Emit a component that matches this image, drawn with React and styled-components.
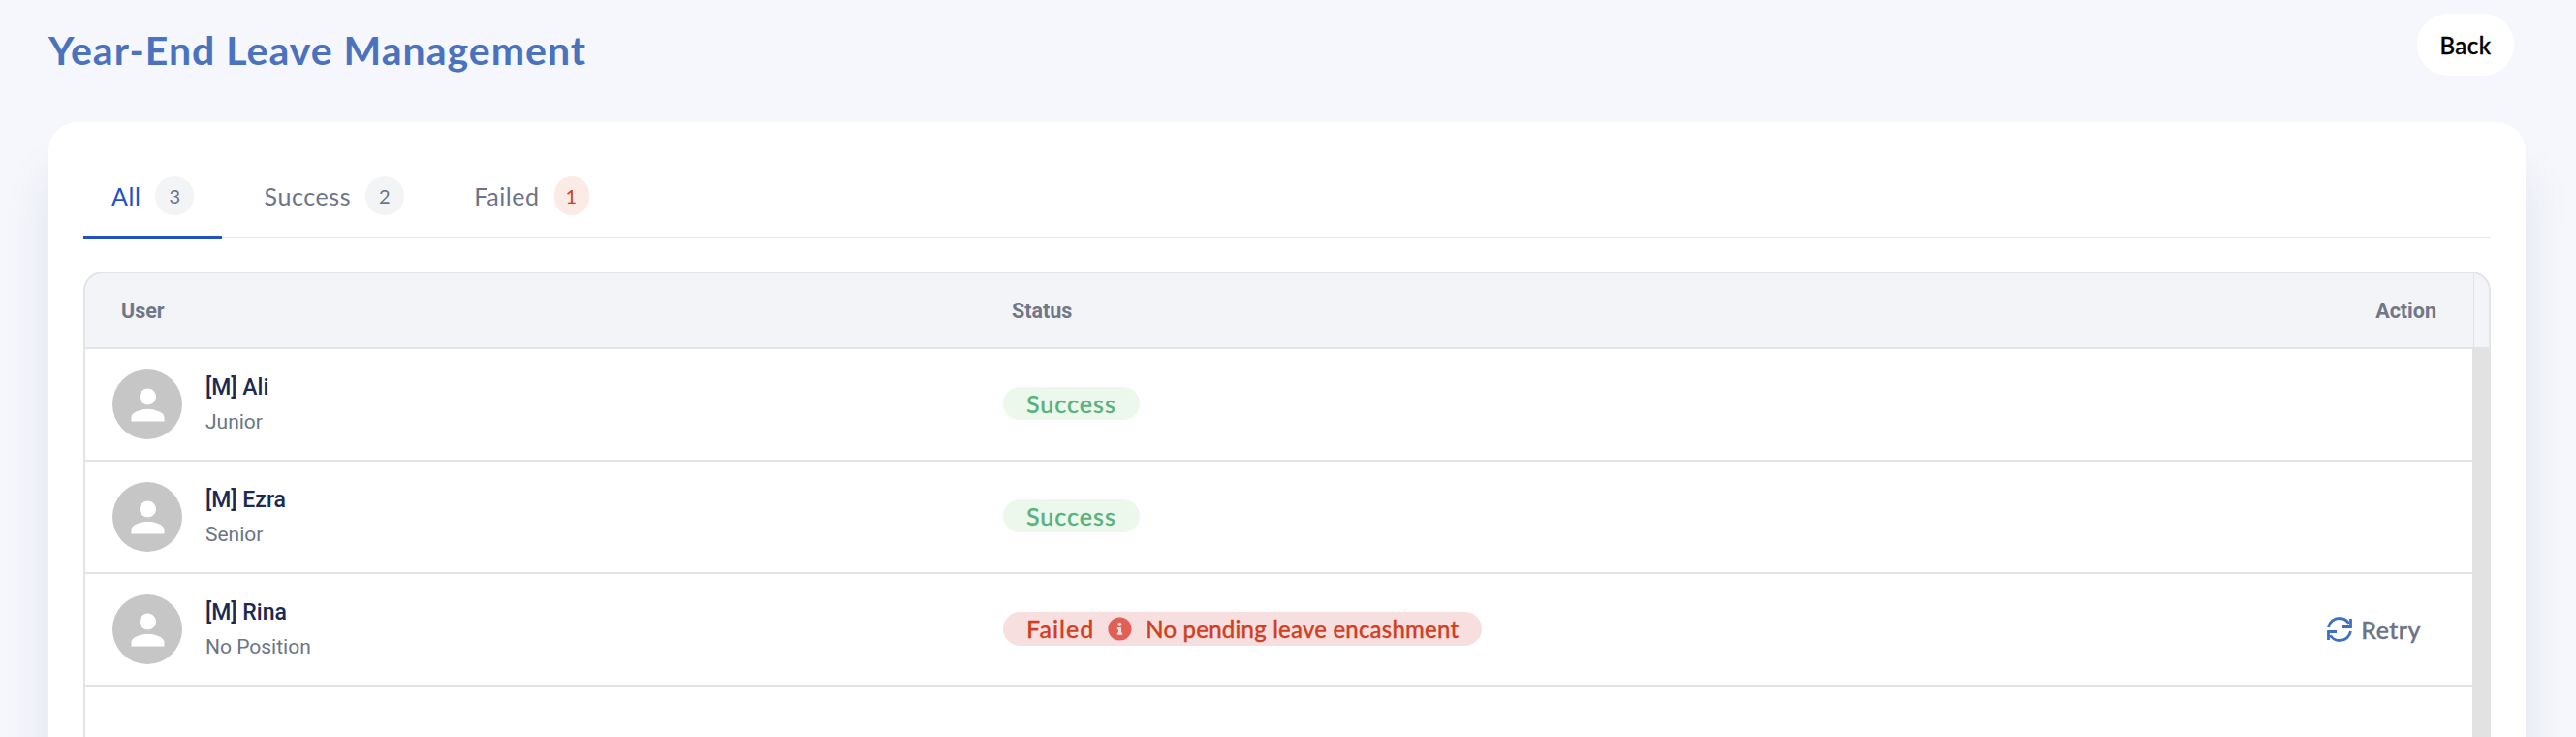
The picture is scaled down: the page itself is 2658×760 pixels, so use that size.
import React from "react";
import styled, { createGlobalStyle } from "styled-components";
import { FaInfoCircle } from "react-icons/fa";

const GlobalStyle = createGlobalStyle`
  html, body {
    margin: 0;
    height: 760px;
    overflow: hidden;
    background: #f5f7fc;
  }
`;

const Page = styled.div`
  width: 2658px;
  height: 760px;
  font-family: "Lato", "Liberation Sans", sans-serif;
  overflow: hidden;
`;

const TopBar = styled.header`
  display: flex;
  justify-content: space-between;
  align-items: flex-start;
  padding: 14px 64px 48px 50px;
`;

const Title = styled.h1`
  margin: 14px 0 0;
  font-size: 41px;
  line-height: 48px;
  font-weight: 700;
  letter-spacing: 1px;
  color: #4a72bd;
`;

const BackButton = styled.button`
  width: 100px;
  height: 64px;
  border: 0;
  border-radius: 32px;
  background: #fff;
  color: #000;
  font-family: "Lato Medium", "Lato", sans-serif;
  font-size: 24px;
  font-weight: 500;
  letter-spacing: 0.4px;
  -webkit-text-stroke: 0.4px #000;
`;

const Card = styled.main`
  margin: 0 52px 0 50px;
  height: 720px;
  box-sizing: border-box;
  padding: 36px 36px 0;
  background: #fff;
  border-radius: 30px;
  box-shadow: 0 50px 50px rgba(40, 50, 90, 0.1);
  display: flex;
  flex-direction: column;
`;

const Tabs = styled.nav`
  display: flex;
  align-items: flex-start;
  gap: 14px;
  height: 83px;
  box-sizing: border-box;
  border-bottom: 1px solid #e6e8f0;
`;

const Tab = styled.div`
  display: flex;
  align-items: center;
  gap: 15px;
  height: 84px;
  box-sizing: border-box;
  padding: 0 29px 2px;
  border-bottom: 3px solid ${(props) => (props.$active ? "#2152c4" : "transparent")};
  color: ${(props) => (props.$active ? "#2152c4" : "#6b7488")};
  font-size: 25px;
  letter-spacing: 0.6px;
`;

const Count = styled.span`
  min-width: ${(props) => (props.$danger ? "36px" : "40px")};
  height: 40px;
  display: flex;
  align-items: center;
  justify-content: center;
  border-radius: 20px;
  background: ${(props) => (props.$danger ? "#fbebe7" : "#f3f4f6")};
  color: ${(props) => (props.$danger ? "#d03c1c" : "#6b7488")};
  font-size: 20px;
`;

const Table = styled.section`
  margin-top: 35px;
  flex: 1;
  display: flex;
  flex-direction: column;
`;

const HeadRow = styled.div`
  display: flex;
  height: 76px;
  background: #f3f4f7;
  border: 2px solid #e3e4e6;
  border-radius: 20px 20px 0 0;
  font-family: "Roboto", sans-serif;
  font-size: 21.5px;
  font-weight: 700;
  color: #6f7789;
`;

const HeadCells = styled.div`
  flex: 1;
  display: grid;
  grid-template-columns: 919px 1fr 200px;
  align-items: center;
  padding: 0 38px 0 37px;
  border-right: 1px solid #e3e4e6;
`;

const HeadAction = styled.span`
  text-align: right;
`;

const ScrollGutter = styled.div`
  width: 15px;
`;

const BodyWrap = styled.div`
  flex: 1;
  display: flex;
`;

const Rows = styled.div`
  flex: 1;
  border-left: 2px solid #e3e4e6;
`;

const ScrollBar = styled.div`
  width: 19px;
  background: #e2e2e2;
`;

const Row = styled.div`
  display: grid;
  grid-template-columns: 919px 1fr 200px;
  align-items: center;
  height: 114px;
  padding: 0 53px 0 28px;
  border-bottom: 2px solid #e3e4e6;
`;

const UserCell = styled.div`
  display: flex;
  align-items: center;
  gap: 24px;
`;

const Avatar = styled.div`
  width: 72px;
  height: 72px;
  border-radius: 50%;
  background: #c6c6c6;
  display: flex;
  align-items: center;
  justify-content: center;
`;

const UserText = styled.div`
  display: flex;
  flex-direction: column;
  gap: 10px;
  font-family: "Roboto", sans-serif;
`;

const UserName = styled.div`
  font-size: 23px;
  line-height: 26px;
  font-weight: 500;
  color: #1a2a50;
`;

const UserRole = styled.div`
  font-size: 21px;
  line-height: 24px;
  color: #6b7488;
`;

const Pill = styled.div`
  justify-self: start;
  display: flex;
  align-items: center;
  height: ${(props) => (props.$failed ? "35px" : "34px")};
  margin-bottom: 2px;
  padding: 0 24px;
  border-radius: 18px;
  background: ${(props) => (props.$failed ? "#f7dfe0" : "#edf8ec")};
  color: ${(props) => (props.$failed ? "#d03f22" : "#58b27e")};
  font-family: "Lato Medium", "Lato", sans-serif;
  font-size: 25px;
  font-weight: 500;
  -webkit-text-stroke: 0.3px ${(props) => (props.$failed ? "#d03f22" : "#58b27e")};
`;

const PillStatus = styled.span`
  letter-spacing: 1px;
`;

const PillReason = styled.span`
  font-size: 24px;
  letter-spacing: 0.2px;
`;

const PillInfo = styled.span`
  display: flex;
  align-items: center;
  margin: 0 14px 0 14px;
  color: #e25f55;
  font-size: 25px;
`;

const Retry = styled.div`
  justify-self: end;
  display: flex;
  align-items: center;
  gap: 8px;
  color: #6b7488;
  font-family: "Lato Medium", "Lato", sans-serif;
  font-size: 25px;
  font-weight: 500;
  letter-spacing: 0.5px;
  -webkit-text-stroke: 0.4px #6b7488;
`;

const PersonIcon = () => (
  <svg width="51" height="51" viewBox="0 0 24 24" fill="#fff">
    <path d="M12 12c2.21 0 4-1.79 4-4s-1.79-4-4-4-4 1.79-4 4 1.79 4 4 4zm0 2c-2.67 0-8 1.34-8 4v2h16v-2c0-2.66-5.33-4-8-4z" />
  </svg>
);

const RetryIcon = () => (
  <svg width="28" height="28" viewBox="0 0 28 28" fill="none" stroke="#3f6fc4" strokeWidth="2.8">
    <path d="M2.5 12C3.5 6.500 8 2.500 14 2.500c4.200 0 7.600 2 9.600 5.400" />
    <path d="M25.500 16c-1 5.500-5.500 9.500-11.500 9.500-4.200 0-7.600-2-9.600-5.400" />
    <path d="M25.500 3v8.500h-8.500" />
    <path d="M2.500 25v-8.500h8.500" />
  </svg>
);

const users = [
  { name: "[M] Ali", role: "Junior", status: "Success" },
  { name: "[M] Ezra", role: "Senior", status: "Success" },
  { name: "[M] Rina", role: "No Position", status: "Failed", reason: "No pending leave encashment" },
];

const App = () => {
  return (
    <Page>
      <GlobalStyle />
      <TopBar>
        <Title>Year-End Leave Management</Title>
        <BackButton>Back</BackButton>
      </TopBar>
      <Card>
        <Tabs>
          <Tab $active>
            All <Count>3</Count>
          </Tab>
          <Tab>
            Success <Count>2</Count>
          </Tab>
          <Tab>
            Failed <Count $danger>1</Count>
          </Tab>
        </Tabs>
        <Table>
          <HeadRow>
            <HeadCells>
              <span>User</span>
              <span>Status</span>
              <HeadAction>Action</HeadAction>
            </HeadCells>
            <ScrollGutter />
          </HeadRow>
          <BodyWrap>
            <Rows>
              {users.map((user) => (
                <Row key={user.name}>
                  <UserCell>
                    <Avatar>
                      <PersonIcon />
                    </Avatar>
                    <UserText>
                      <UserName>{user.name}</UserName>
                      <UserRole>{user.role}</UserRole>
                    </UserText>
                  </UserCell>
                  {user.reason ? (
                    <Pill $failed>
                      <PillStatus>{user.status}</PillStatus>
                      <PillInfo>
                        <FaInfoCircle />
                      </PillInfo>
                      <PillReason>{user.reason}</PillReason>
                    </Pill>
                  ) : (
                    <Pill>
                      <PillStatus>{user.status}</PillStatus>
                    </Pill>
                  )}
                  {user.reason && (
                    <Retry>
                      <RetryIcon />
                      Retry
                    </Retry>
                  )}
                </Row>
              ))}
            </Rows>
            <ScrollBar />
          </BodyWrap>
        </Table>
      </Card>
    </Page>
  );
};

export default App;
